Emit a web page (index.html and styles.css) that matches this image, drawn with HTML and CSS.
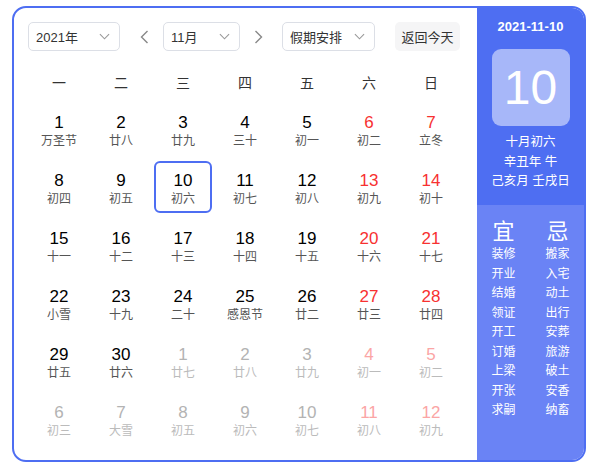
FILE: index.html
```html
<!DOCTYPE html>
<html lang="zh-CN">
<head>
<meta charset="utf-8">
<link rel="stylesheet" href="styles.css">
</head>
<body>
<div class="cal">
  <div class="main">
    <div class="toolbar">
      <div class="select sel-year"><span>2021年</span><svg class="chev" viewBox="0 0 12 7"><path d="M1 1l5 5 5-5"/></svg></div>
      <div class="arrow"><svg viewBox="0 0 9 14"><path d="M7.5 1L1.5 7l6 6"/></svg></div>
      <div class="select sel-month"><span>11月</span><svg class="chev" viewBox="0 0 12 7"><path d="M1 1l5 5 5-5"/></svg></div>
      <div class="arrow"><svg viewBox="0 0 9 14"><path d="M1.5 1l6 6-6 6"/></svg></div>
      <div class="select sel-hol"><span>假期安排</span><svg class="chev" viewBox="0 0 12 7"><path d="M1 1l5 5 5-5"/></svg></div>
      <div class="btn">返回今天</div>
    </div>
    <div class="weekdays">
      <div>一</div><div>二</div><div>三</div><div>四</div><div>五</div><div>六</div><div>日</div>
    </div>
    <div class="days">
      <div class="day"><b>1</b><i>万圣节</i></div>
      <div class="day"><b>2</b><i>廿八</i></div>
      <div class="day"><b>3</b><i>廿九</i></div>
      <div class="day"><b>4</b><i>三十</i></div>
      <div class="day"><b>5</b><i>初一</i></div>
      <div class="day we"><b>6</b><i>初二</i></div>
      <div class="day we"><b>7</b><i>立冬</i></div>

      <div class="day"><b>8</b><i>初四</i></div>
      <div class="day"><b>9</b><i>初五</i></div>
      <div class="day sel"><b>10</b><i>初六</i></div>
      <div class="day"><b>11</b><i>初七</i></div>
      <div class="day"><b>12</b><i>初八</i></div>
      <div class="day we"><b>13</b><i>初九</i></div>
      <div class="day we"><b>14</b><i>初十</i></div>

      <div class="day"><b>15</b><i>十一</i></div>
      <div class="day"><b>16</b><i>十二</i></div>
      <div class="day"><b>17</b><i>十三</i></div>
      <div class="day"><b>18</b><i>十四</i></div>
      <div class="day"><b>19</b><i>十五</i></div>
      <div class="day we"><b>20</b><i>十六</i></div>
      <div class="day we"><b>21</b><i>十七</i></div>

      <div class="day"><b>22</b><i>小雪</i></div>
      <div class="day"><b>23</b><i>十九</i></div>
      <div class="day"><b>24</b><i>二十</i></div>
      <div class="day"><b>25</b><i>感恩节</i></div>
      <div class="day"><b>26</b><i>廿二</i></div>
      <div class="day we"><b>27</b><i>廿三</i></div>
      <div class="day we"><b>28</b><i>廿四</i></div>

      <div class="day"><b>29</b><i>廿五</i></div>
      <div class="day"><b>30</b><i>廿六</i></div>
      <div class="day off"><b>1</b><i>廿七</i></div>
      <div class="day off"><b>2</b><i>廿八</i></div>
      <div class="day off"><b>3</b><i>廿九</i></div>
      <div class="day off we"><b>4</b><i>初一</i></div>
      <div class="day off we"><b>5</b><i>初二</i></div>

      <div class="day off"><b>6</b><i>初三</i></div>
      <div class="day off"><b>7</b><i>大雪</i></div>
      <div class="day off"><b>8</b><i>初五</i></div>
      <div class="day off"><b>9</b><i>初六</i></div>
      <div class="day off"><b>10</b><i>初七</i></div>
      <div class="day off we"><b>11</b><i>初八</i></div>
      <div class="day off we"><b>12</b><i>初九</i></div>
    </div>
  </div>
  <div class="side">
    <div class="side-top">
      <div class="date">2021-11-10</div>
      <div class="bigday">10</div>
      <div class="lunar">
        <div>十月初六</div>
        <div>辛丑年 牛</div>
        <div>己亥月 壬戌日</div>
      </div>
    </div>
    <div class="side-bottom">
      <div class="col">
        <div class="head">宜</div>
        <div>装修</div><div>开业</div><div>结婚</div><div>领证</div><div>开工</div><div>订婚</div><div>上梁</div><div>开张</div><div>求嗣</div>
      </div>
      <div class="col">
        <div class="head">忌</div>
        <div>搬家</div><div>入宅</div><div>动土</div><div>出行</div><div>安葬</div><div>旅游</div><div>破土</div><div>安香</div><div>纳畜</div>
      </div>
    </div>
  </div>
</div>
</body>
</html>
```

FILE: styles.css
```css
* { box-sizing: border-box; }
body {
  margin: 0;
  background: #fff;
  font-family: "Liberation Sans", "Noto Sans CJK SC", sans-serif;
  color: #333;
}
.cal {
  margin: 6px 0 0 12px;
  width: 574px;
  height: 456px;
  border: 2px solid #4e6ef2;
  border-radius: 14px;
  display: flex;
  overflow: hidden;
  background: #fff;
}
.main {
  width: 463px;
  padding: 14px 0 0 14px;
}
.toolbar {
  display: flex;
  align-items: center;
  height: 29px;
}
.select {
  height: 29px;
  border: 1px solid #dcdfe6;
  border-radius: 5px;
  display: flex;
  align-items: center;
  justify-content: space-between;
  padding: 0 9px 0 7px;
  font-size: 13px;
  color: #333;
}
.sel-year { width: 92px; }
.sel-month { width: 77px; }
.sel-hol { width: 93px; }
.chev {
  width: 11px;
  height: 7px;
  fill: none;
  stroke: #999;
  stroke-width: 1.2;
}
.arrow {
  width: 24px;
  height: 29px;
  display: flex;
  align-items: center;
  justify-content: center;
}
.arrow svg {
  width: 9px;
  height: 14px;
  fill: none;
  stroke: #888;
  stroke-width: 1.4;
}
.sel-year + .arrow { margin: 0 7px 0 12px; }
.sel-month + .arrow { margin: 0 12px 0 6px; }
.btn {
  margin-left: 20px;
  width: 65px;
  height: 29px;
  background: #f5f5f6;
  border-radius: 5px;
  font-size: 13px;
  color: #333;
  display: flex;
  align-items: center;
  justify-content: center;
}
.weekdays {
  margin-top: 17px;
  display: grid;
  grid-template-columns: repeat(7, 62px);
  height: 30px;
  line-height: 30px;
  font-size: 14px;
  text-align: center;
  color: #333;
}
.days {
  margin-top: 2px;
  display: grid;
  grid-template-columns: repeat(7, 62px);
  grid-auto-rows: 58px;
}
.day {
  margin: 3px 2px;
  border: 2px solid transparent;
  border-radius: 6px;
  display: flex;
  flex-direction: column;
  align-items: center;
  padding-top: 8px;
}
.day b {
  font-weight: normal;
  font-size: 17px;
  line-height: 20px;
  color: #000;
}
.day i {
  font-style: normal;
  font-size: 12px;
  line-height: 16px;
  color: #555;
}
.day.we b { color: #f73131; }
.day.off b { color: #b3b3b3; }
.day.off i { color: #bbb; }
.day.off.we b { color: #fba5a5; }
.day.sel { border-color: #4e6ef2; }
.side {
  flex: 1;
  display: flex;
  flex-direction: column;
  color: #fff;
}
.side-top {
  height: 197px;
  background: #4e6ef2;
  display: flex;
  flex-direction: column;
  align-items: center;
  padding-top: 11px;
}
.date {
  font-size: 13px;
  font-weight: bold;
  line-height: 16px;
}
.bigday {
  margin-top: 14px;
  width: 78px;
  height: 77px;
  border-radius: 9px;
  background: rgba(255, 255, 255, 0.5);
  font-size: 48px;
  line-height: 77px;
  text-align: center;
}
.lunar {
  margin-top: 7px;
  font-size: 12.5px;
  line-height: 19.5px;
  text-align: center;
}
.side-bottom {
  flex: 1;
  background: #6a83f5;
  display: flex;
  justify-content: center;
  gap: 6px;
  padding-top: 14px;
}
.col {
  width: 48px;
  text-align: center;
  font-size: 12px;
  line-height: 19.5px;
}
.col .head {
  font-size: 22px;
  line-height: 26px;
}
```
